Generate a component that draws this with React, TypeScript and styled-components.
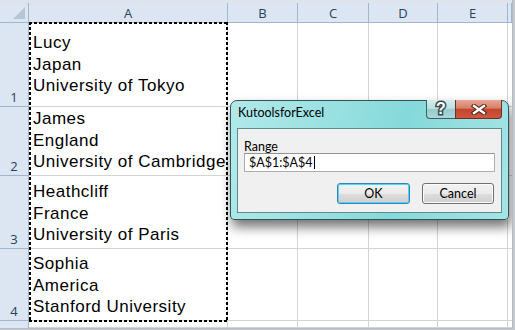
import styled, { createGlobalStyle } from 'styled-components'

const GlobalStyle = createGlobalStyle`
  html, body {
    margin: 0;
    padding: 0;
  }
  body {
    background: #c4c9d0;
    font-family: "Liberation Sans", Arial, sans-serif;
    width: 515px;
    height: 330px;
    overflow: hidden;
  }
`

const COLUMN_WIDTHS = [29, 199, 70, 71, 69, 70, 4]
const ROW_HEIGHTS = [20, 84, 69, 73, 72, 7]
const COLUMN_LABELS = ['A', 'B', 'C', 'D', 'E', '']

// gap under the last line of text differs a little per row in the sheet
const ROWS = [
  { lines: ['Lucy', 'Japan', 'University of Tokyo'], gap: 9 },
  { lines: ['James', 'England', 'University of Cambridge'], gap: 2 },
  { lines: ['Heathcliff', 'France', 'University of Paris'], gap: 2 },
  { lines: ['Sophia', 'America', 'Stanford University'], gap: 2 },
]

export default function App() {
  return (
    <>
      <GlobalStyle />
      <Screen>
        <Ribbon />
        <Sheet>
          <Corner $row={1} $col={1}>
            <CornerArrow />
          </Corner>
          {COLUMN_LABELS.map((label, i) => (
            <ColumnHeader key={i} $row={1} $col={i + 2}>
              {label}
            </ColumnHeader>
          ))}

          {ROWS.map((row, r) => (
            <RowGroup key={r} lines={row.lines} gap={row.gap} index={r + 1} />
          ))}

          <PartialRowHeader $row={6} $col={1}>
            5
          </PartialRowHeader>
          {COLUMN_LABELS.map((_, i) => (
            <Cell key={i} $row={6} $col={i + 2} $gap={0} />
          ))}

          <Selection />
        </Sheet>

        <Dialog>
          <TitleBar>
            <Title>KutoolsforExcel</Title>
            <CaptionButtons>
              <HelpButton>?</HelpButton>
              <CloseButton>
                <svg width="20" height="11" viewBox="0 0 20 11">
                  <path
                    d="M5 2 L15 9 M15 2 L5 9"
                    stroke="#4a2019"
                    strokeWidth="4.4"
                    strokeLinecap="square"
                  />
                  <path
                    d="M5 2 L15 9 M15 2 L5 9"
                    stroke="#ffffff"
                    strokeWidth="2.4"
                    strokeLinecap="square"
                  />
                </svg>
              </CloseButton>
            </CaptionButtons>
          </TitleBar>
          <Client>
            <FieldLabel>Range</FieldLabel>
            <RangeInput>
              $A$1:$A$4
              <Caret />
            </RangeInput>
            <ButtonRow>
              <DialogButton $primary>OK</DialogButton>
              <DialogButton>Cancel</DialogButton>
            </ButtonRow>
          </Client>
        </Dialog>
      </Screen>
    </>
  )
}

function RowGroup({
  lines,
  gap,
  index,
}: {
  lines: string[]
  gap: number
  index: number
}) {
  const row = index + 1
  return (
    <>
      <RowHeader $row={row} $col={1}>
        {index}
      </RowHeader>
      {COLUMN_LABELS.map((_, i) => (
        <Cell key={i} $row={row} $col={i + 2} $gap={gap}>
          {i === 0 &&
            lines.map((line) => <CellLine key={line}>{line}</CellLine>)}
        </Cell>
      ))}
    </>
  )
}

interface Placed {
  $row: number
  $col: number
}

const Screen = styled.div`
  position: relative;
  width: 512px;
  height: 328px;
  background: #ffffff;
  display: flex;
  flex-direction: column;
  overflow: hidden;
  border-right: 1px solid #b7bcc4;
  border-bottom: 1px solid #b7bcc4;
`

const Ribbon = styled.div`
  height: 3px;
  background: #dfe4ea;
  flex: none;
`

const Sheet = styled.div`
  display: grid;
  grid-template-columns: ${COLUMN_WIDTHS.map((w) => `${w}px`).join(' ')};
  grid-template-rows: ${ROW_HEIGHTS.map((h) => `${h}px`).join(' ')};
`

const headerBase = `
  box-sizing: border-box;
  background: #dce6f2;
  border-right: 1px solid #9eb6ce;
  border-bottom: 1px solid #9eb6ce;
  font-family: "Open Sans", "Liberation Sans", sans-serif;
  font-size: 13px;
  color: #27415f;
  overflow: hidden;
`

const Corner = styled.div<Placed>`
  ${headerBase}
  grid-row: ${(p) => p.$row};
  grid-column: ${(p) => p.$col};
  position: relative;
`

const CornerArrow = styled.div`
  position: absolute;
  right: 3px;
  bottom: 3px;
  width: 0;
  height: 0;
  border-left: 12px solid transparent;
  border-bottom: 12px solid #b7c5d6;
`

const ColumnHeader = styled.div<Placed>`
  ${headerBase}
  grid-row: ${(p) => p.$row};
  grid-column: ${(p) => p.$col};
  display: flex;
  align-items: center;
  justify-content: center;
`

const RowHeader = styled.div<Placed>`
  ${headerBase}
  grid-row: ${(p) => p.$row};
  grid-column: ${(p) => p.$col};
  display: flex;
  align-items: flex-end;
  justify-content: center;
  line-height: 18px;
`

const PartialRowHeader = styled(RowHeader)`
  align-items: flex-start;
  border-bottom: none;
  padding-top: 2px;
`

const Cell = styled.div<Placed & { $gap: number }>`
  grid-row: ${(p) => p.$row};
  grid-column: ${(p) => p.$col};
  box-sizing: border-box;
  border-right: 1px solid #d4d4d4;
  border-bottom: 1px solid #d4d4d4;
  display: flex;
  flex-direction: column;
  justify-content: flex-end;
  padding: 0 0 ${(p) => p.$gap}px 4px;
  overflow: hidden;
`

const CellLine = styled.div`
  font-family: "Liberation Sans", Arial, sans-serif;
  font-size: 17px;
  letter-spacing: 0.5px;
  line-height: 21.7px;
  color: #000000;
  white-space: nowrap;
`

const dash = (dir: string) =>
  `repeating-linear-gradient(${dir}, #000 0 3px, transparent 3px 5px)`

const Selection = styled.div`
  grid-column: 2;
  grid-row: 2 / 6;
  margin: -1px 0 -1px 0;
  pointer-events: none;
  background-image: ${dash('to right')}, ${dash('to right')}, ${dash('to bottom')},
    ${dash('to bottom')};
  background-size: 100% 2px, 100% 2px, 2px 100%, 2px 100%;
  background-position: top left, bottom left, top left, top right;
  background-repeat: no-repeat;
`

const Dialog = styled.div`
  position: absolute;
  left: 230px;
  top: 100px;
  width: 279px;
  height: 120px;
  box-sizing: border-box;
  border: 1px solid #2f5558;
  border-radius: 7px 7px 4px 4px;
  background: linear-gradient(
    100deg,
    #b1e9ea 0%,
    #96dfe0 40%,
    #85d9da 60%,
    #a5e4e5 100%
  );
  box-shadow: 2px 7px 12px rgba(0, 0, 0, 0.55);
  display: flex;
  flex-direction: column;
  padding: 0 6px 6px 6px;
  font-family: Lato, "Open Sans", sans-serif;
`

const TitleBar = styled.div`
  height: 27px;
  display: flex;
  align-items: flex-start;
  flex: none;
`

const Title = styled.div`
  font-size: 12.5px;
  line-height: 14px;
  margin: 5px 0 0 1px;
  color: #000;
`

const CaptionButtons = styled.div`
  margin-left: auto;
  margin-top: -1px;
  display: flex;
  height: 19px;
`

const captionBase = `
  box-sizing: border-box;
  height: 19px;
  display: flex;
  align-items: center;
  justify-content: center;
  border: 1px solid #3f5c60;
  border-top: none;
`

const HelpButton = styled.div`
  ${captionBase}
  width: 29px;
  border-right: none;
  border-radius: 0 0 0 4px;
  background: linear-gradient(#d3ecee 0%, #b9dfe1 50%, #98ccce 52%, #a9d9db 100%);
  color: #fff;
  font-family: "Liberation Sans", Arial, sans-serif;
  font-weight: bold;
  font-size: 16px;
  -webkit-text-stroke: 3px #3a4a4e;
  paint-order: stroke fill;
`

const CloseButton = styled.div`
  ${captionBase}
  width: 47px;
  border-radius: 0 0 4px 0;
  border-color: #6b2f25;
  background: linear-gradient(#e6a793 0%, #d68068 45%, #c5442c 52%, #d0573f 100%);
`

const Client = styled.div`
  flex: 1;
  box-sizing: border-box;
  background: #f0f0f0;
  border: 1px solid #5e8c8e;
  padding: 12px 6px 0 6px;
  display: flex;
  flex-direction: column;
`

const FieldLabel = styled.div`
  font-size: 12.5px;
  line-height: 12px;
  color: #000;
`

const RangeInput = styled.div`
  box-sizing: border-box;
  height: 19px;
  width: 251px;
  background: #fff;
  border: 1px solid #abadb3;
  border-top-color: #8f9297;
  display: flex;
  align-items: center;
  padding-left: 4px;
  font-size: 12.5px;
  color: #000;
`

const Caret = styled.span`
  display: inline-block;
  width: 1px;
  height: 13px;
  background: #000;
  margin-left: 1px;
`

const ButtonRow = styled.div`
  display: flex;
  justify-content: flex-end;
  gap: 12px;
  margin-top: 11px;
  padding-right: 1px;
`

const DialogButton = styled.div<{ $primary?: boolean }>`
  box-sizing: border-box;
  width: ${(p) => (p.$primary ? 73 : 72)}px;
  height: 21px;
  border: 1px solid ${(p) => (p.$primary ? '#3c7fb1' : '#707070')};
  border-radius: 3px;
  box-shadow: ${(p) =>
    p.$primary ? 'inset 0 0 0 1px #48d8fb' : 'inset 0 0 0 1px #fbfbfb'};
  background: linear-gradient(#f2f2f2 0%, #ebebeb 50%, #dddddd 51%, #cfcfcf 100%);
  display: flex;
  align-items: center;
  justify-content: center;
  font-size: 12.5px;
  color: #000;
`
